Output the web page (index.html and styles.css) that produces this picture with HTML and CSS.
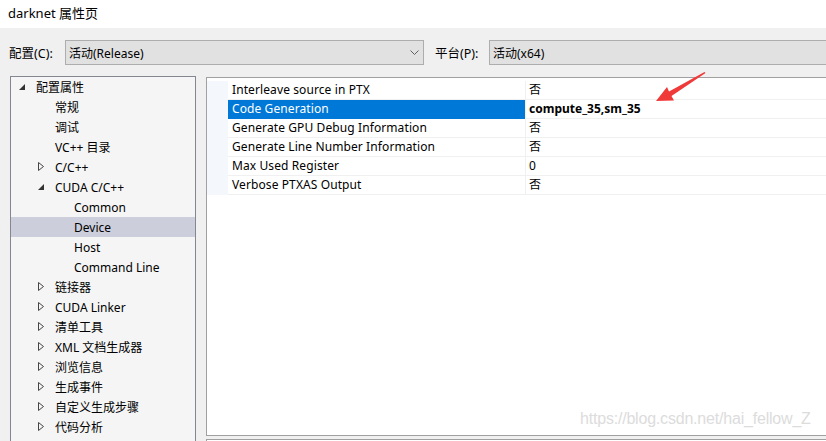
FILE: index.html
```html
<!DOCTYPE html>
<html lang="zh">
<head>
<meta charset="utf-8">
<title>darknet 属性页</title>
<link rel="stylesheet" href="styles.css">
</head>
<body>
<div class="window">
  <div class="titlebar">darknet 属性页</div>
  <div class="config-row">
    <span class="label">配置(C):</span>
    <div class="combo combo-config">
      <span>活动(Release)</span>
      <svg class="chev" width="9" height="6" viewBox="0 0 9 6"><polyline points="0.5,0.5 4.5,4.5 8.5,0.5" fill="none" stroke="#606060" stroke-width="1"/></svg>
    </div>
    <span class="label label-platform">平台(P):</span>
    <div class="combo combo-platform"><span>活动(x64)</span></div>
  </div>
  <div class="main">
    <div class="tree">
      <div class="node l0"><span class="tw"><svg width="7" height="7" viewBox="0 0 7 7"><polygon points="6,0 6,6 0,6" fill="#333"/></svg></span><span>配置属性</span></div>
      <div class="node l1"><span class="tw"></span><span>常规</span></div>
      <div class="node l1"><span class="tw"></span><span>调试</span></div>
      <div class="node l1"><span class="tw"></span><span>VC++ 目录</span></div>
      <div class="node l1"><span class="tw"><svg width="7" height="10" viewBox="0 0 7 10"><polygon points="0.5,0.5 5.5,4.5 0.5,8.5" fill="none" stroke="#444"/></svg></span><span>C/C++</span></div>
      <div class="node l1"><span class="tw"><svg width="7" height="7" viewBox="0 0 7 7"><polygon points="6,0 6,6 0,6" fill="#333"/></svg></span><span>CUDA C/C++</span></div>
      <div class="node l2"><span class="tw"></span><span>Common</span></div>
      <div class="node l2 selected"><span class="tw"></span><span>Device</span></div>
      <div class="node l2"><span class="tw"></span><span>Host</span></div>
      <div class="node l2"><span class="tw"></span><span>Command Line</span></div>
      <div class="node l1"><span class="tw"><svg width="7" height="10" viewBox="0 0 7 10"><polygon points="0.5,0.5 5.5,4.5 0.5,8.5" fill="none" stroke="#444"/></svg></span><span>链接器</span></div>
      <div class="node l1"><span class="tw"><svg width="7" height="10" viewBox="0 0 7 10"><polygon points="0.5,0.5 5.5,4.5 0.5,8.5" fill="none" stroke="#444"/></svg></span><span>CUDA Linker</span></div>
      <div class="node l1"><span class="tw"><svg width="7" height="10" viewBox="0 0 7 10"><polygon points="0.5,0.5 5.5,4.5 0.5,8.5" fill="none" stroke="#444"/></svg></span><span>清单工具</span></div>
      <div class="node l1"><span class="tw"><svg width="7" height="10" viewBox="0 0 7 10"><polygon points="0.5,0.5 5.5,4.5 0.5,8.5" fill="none" stroke="#444"/></svg></span><span>XML 文档生成器</span></div>
      <div class="node l1"><span class="tw"><svg width="7" height="10" viewBox="0 0 7 10"><polygon points="0.5,0.5 5.5,4.5 0.5,8.5" fill="none" stroke="#444"/></svg></span><span>浏览信息</span></div>
      <div class="node l1"><span class="tw"><svg width="7" height="10" viewBox="0 0 7 10"><polygon points="0.5,0.5 5.5,4.5 0.5,8.5" fill="none" stroke="#444"/></svg></span><span>生成事件</span></div>
      <div class="node l1"><span class="tw"><svg width="7" height="10" viewBox="0 0 7 10"><polygon points="0.5,0.5 5.5,4.5 0.5,8.5" fill="none" stroke="#444"/></svg></span><span>自定义生成步骤</span></div>
      <div class="node l1"><span class="tw"><svg width="7" height="10" viewBox="0 0 7 10"><polygon points="0.5,0.5 5.5,4.5 0.5,8.5" fill="none" stroke="#444"/></svg></span><span>代码分析</span></div>
    </div>
    <div class="right">
      <div class="grid">
        <div class="prop"><div class="gutter"></div><div class="name">Interleave source in PTX</div><div class="value">否</div></div>
        <div class="prop active"><div class="gutter"></div><div class="name">Code Generation</div><div class="value bold">compute_35,sm_35</div></div>
        <div class="prop"><div class="gutter"></div><div class="name">Generate GPU Debug Information</div><div class="value">否</div></div>
        <div class="prop"><div class="gutter"></div><div class="name">Generate Line Number Information</div><div class="value">否</div></div>
        <div class="prop"><div class="gutter"></div><div class="name">Max Used Register</div><div class="value">0</div></div>
        <div class="prop"><div class="gutter"></div><div class="name">Verbose PTXAS Output</div><div class="value">否</div></div>
      </div>
      <div class="desc"></div>
    </div>
  </div>
  <svg class="annot-arrow" width="60" height="40" viewBox="0 0 60 40">
    <polygon points="55.5,1 54.5,0 19,19.5 17,15 6,29 24,28.5 21.5,24" fill="#f03a3a"/>
  </svg>
  <div class="watermark">https://blog.csdn.net/hai_fellow_Z</div>
</div>
</body>
</html>
```

FILE: styles.css
```css
html, body {
  margin: 0;
  padding: 0;
}
body {
  width: 826px;
  height: 441px;
  overflow: hidden;
  background: #f0f0f0;
  font-family: "Noto Sans", "Noto Sans CJK SC", sans-serif;
  font-size: 12px;
  color: #000;
}
.window {
  position: relative;
  width: 826px;
  height: 441px;
  overflow: hidden;
}
.titlebar {
  height: 28px;
  background: #fff;
  padding-left: 8px;
  line-height: 26px;
  font-size: 13px;
}
.config-row {
  display: flex;
  align-items: center;
  height: 25px;
  margin-top: 12px;
  padding-left: 9px;
  font-size: 12.5px;
}
.label {
  width: 56px;
  flex: none;
}
.label-platform {
  margin-left: 11px;
  width: 54px;
}
.combo {
  box-sizing: border-box;
  height: 25px;
  background: #e1e1e1;
  border: 1px solid #adadad;
  display: flex;
  align-items: center;
  padding-left: 3px;
  flex: none;
  font-size: 12px;
}
.combo-config {
  width: 359px;
  justify-content: space-between;
  padding-right: 4px;
}
.combo-platform {
  width: 360px;
}
.chev {
  display: block;
}
.main {
  display: flex;
  margin-top: 11px;
  padding-left: 10px;
  gap: 10px;
}
.tree {
  box-sizing: border-box;
  width: 186px;
  height: 380px;
  flex: none;
  background: #f5f5f5;
  border: 1px solid #828790;
  padding-top: 0;
}
.node {
  height: 20px;
  display: flex;
  align-items: center;
  white-space: nowrap;
}
.node.l0 { padding-left: 8px; }
.node.l1 { padding-left: 27px; }
.node.l2 { padding-left: 46px; }
.node.selected {
  background: #cccedb;
}
.tw {
  width: 17px;
  flex: none;
  display: flex;
  align-items: center;
}
.tw svg { display: block; }
.right {
  flex: 1;
  margin-right: -20px;
  display: flex;
  flex-direction: column;
  gap: 3px;
  margin-top: 1px;
}
.grid {
  box-sizing: border-box;
  height: 359px;
  background: #fff;
  border: 1px solid #a0a0a0;
  padding-top: 3px;
}
.prop {
  display: flex;
  height: 19px;
}
.gutter {
  width: 21px;
  flex: none;
  background: #f4f7fc;
}
.name {
  box-sizing: border-box;
  width: 297px;
  flex: none;
  padding-left: 4px;
  line-height: 18px;
  border-bottom: 1px solid #f0f0f0;
  white-space: nowrap;
  letter-spacing: 0.1px;
}
.value {
  flex: 1;
  padding-left: 3px;
  line-height: 18px;
  border-left: 1px solid #f0f0f0;
  border-bottom: 1px solid #f0f0f0;
  white-space: nowrap;
}
.value.bold {
  font-weight: bold;
}
.prop.active .name {
  background: #0078d7;
  color: #fff;
  border-bottom-color: #0078d7;
}
.desc {
  height: 40px;
  background: #fff;
  border: 1px solid #a0a0a0;
}
.annot-arrow {
  position: absolute;
  left: 650px;
  top: 72px;
}
.watermark {
  position: absolute;
  left: 580px;
  top: 410px;
  font-family: "Liberation Sans", Arial, sans-serif;
  font-size: 16px;
  color: #dcdcdc;
  letter-spacing: -0.2px;
}
```
